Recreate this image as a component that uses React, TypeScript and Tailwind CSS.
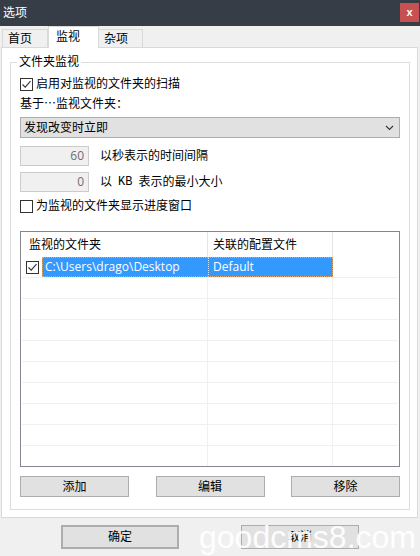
import React from "react";

const Check = ({ checked }: { checked?: boolean }) => (
  <div className="w-[13px] h-[13px] border border-[#333333] bg-white flex items-center justify-center shrink-0">
    {checked && (
      <svg width="11" height="11" viewBox="0 0 11 11">
        <path d="M1.5 5.5 L4.2 8.2 L9.5 2.2" fill="none" stroke="#333333" strokeWidth="1.1" />
      </svg>
    )}
  </div>
);

const Btn = ({ label, className = "" }: { label: string; className?: string }) => (
  <div
    className={
      "bg-[#e1e1e1] border border-[#adadad] flex items-center justify-center text-[12px] leading-[16px] text-black " +
      className
    }
  >
    {label}
  </div>
);

export default function App() {
  const rows = Array.from({ length: 8 });
  return (
    <div className="relative w-[420px] h-[556px] bg-[#f0f0f0] overflow-hidden font-['Open_Sans','Noto_Sans_CJK_SC',sans-serif] text-[12px] text-black flex flex-col">
      {/* Title bar */}
      <div className="h-[26px] bg-[#363d47] flex items-start justify-between shrink-0">
        <div className="pl-[3px] pt-[4px] text-white text-[12px] leading-[18px]">选项</div>
        <div className="mt-[3px] mr-[1px] w-[19px] h-[19px] bg-[#c75050] flex items-center justify-center text-white text-[11px] font-bold leading-none font-['Liberation_Sans',sans-serif]">
          x
        </div>
      </div>

      {/* Tabs */}
      <div className="h-[21px] flex items-end pl-[2px] shrink-0">
        <div className="w-[46px] h-[18px] border border-b-0 border-[#d9d9d9] bg-[#f0f0f0] pl-[5px] leading-[17px]">首页</div>
        <div className="relative z-10 w-[51px] h-[22px] -mb-px border border-b-0 border-[#d9d9d9] bg-white pl-[7px] leading-[19px]">
          监视
        </div>
        <div className="w-[44px] h-[18px] border border-b-0 border-l-0 border-[#d9d9d9] bg-[#f0f0f0] pl-[5px] leading-[17px]">杂项</div>
      </div>

      {/* Panel */}
      <div className="ml-[1px] w-[417px] h-[471px] border border-[#d9d9d9] bg-white pt-[14px] pl-[8px] shrink-0">
        <div className="relative w-[400px] h-[448px] border border-[#dcdcdc] pl-[9px] flex flex-col">
          <div className="absolute left-[6px] top-[-9px] px-[2px] bg-white leading-[16px]">文件夹监视</div>

          <div className="mt-[13px] h-[16px] flex items-center gap-[3px]">
            <Check checked />
            <span className="leading-[16px]">启用对监视的文件夹的扫描</span>
          </div>

          <div className="mt-[3px] h-[16px] leading-[16px] font-['Noto_Sans_CJK_SC',sans-serif]">基于…监视文件夹：</div>

          <div className="mt-[6px] w-[380px] h-[21px] bg-[#e1e1e1] border border-[#adadad] flex items-center justify-between pl-[3px] pr-[5px]">
            <span className="leading-[16px]">发现改变时立即</span>
            <svg width="9" height="6" viewBox="0 0 9 6">
              <path d="M1 1 L4.5 4.5 L8 1" fill="none" stroke="#333333" strokeWidth="1.1" />
            </svg>
          </div>

          <div className="mt-[8px] h-[20px] flex items-center">
            <div className="w-[69px] h-[20px] border border-[#cccccc] bg-[#f0f0f0] text-right pr-[4px] text-[#6d6d6d] leading-[18px]">
              60
            </div>
            <span className="ml-[11px] leading-[16px]">以秒表示的时间间隔</span>
          </div>

          <div className="mt-[6px] h-[20px] flex items-center">
            <div className="w-[69px] h-[20px] border border-[#cccccc] bg-[#f0f0f0] text-right pr-[4px] text-[#6d6d6d] leading-[18px]">
              0
            </div>
            <span className="ml-[11px] leading-[16px] flex items-center">
              以<span className="mx-[6px] font-['Liberation_Mono',monospace] text-[12px]">KB</span>表示的最小大小
            </span>
          </div>

          <div className="mt-[6px] h-[16px] flex items-center gap-[3px]">
            <Check />
            <span className="leading-[16px]">为监视的文件夹显示进度窗口</span>
          </div>

          {/* List */}
          <div className="mt-[17px] w-[380px] h-[236px] border border-[#828790] bg-white pl-[1px] pr-[1px] flex flex-col overflow-hidden">
            <div className="h-[25px] flex shrink-0">
              <div className="w-[186px] border-r border-[#e5e5e5] pl-[7px] leading-[25px]">监视的文件夹</div>
              <div className="w-[125px] border-r border-[#e5e5e5] pl-[5px] leading-[25px]">关联的配置文件</div>
              <div className="flex-1" />
            </div>
            <div className="h-[21px] flex shrink-0 border-b border-[#f0f0f0]">
              <div className="w-[186px] flex items-center pl-[4px]">
                <Check checked />
                <div className="ml-[3px] flex-1 h-[20px] bg-[#3399ff] text-white leading-[18px] pl-[2px] border border-dotted border-r-0 border-[#e0a56a]">
                  C:\Users\drago\Desktop
                </div>
              </div>
              <div className="w-[125px] h-[20px] bg-[#3399ff] text-white leading-[18px] pl-[4px] border-l border-[#cde6ff] border-y border-r border-dotted border-y-[#e0a56a] border-r-[#e0a56a]">
                Default
              </div>
              <div className="flex-1" />
            </div>
            {rows.map((_, i) => (
              <div key={i} className="h-[21px] flex shrink-0 border-b border-[#f0f0f0]">
                <div className="w-[186px] border-r border-[#f0f0f0]" />
                <div className="w-[125px] border-r border-[#f0f0f0]" />
                <div className="flex-1" />
              </div>
            ))}
            <div className="flex-1 flex">
              <div className="w-[186px] border-r border-[#f0f0f0]" />
              <div className="w-[125px] border-r border-[#f0f0f0]" />
              <div className="flex-1" />
            </div>
          </div>

          <div className="mt-[9px] w-[380px] flex justify-between">
            <Btn label="添加" className="w-[109px] h-[21px]" />
            <Btn label="编辑" className="w-[109px] h-[21px]" />
            <Btn label="移除" className="w-[109px] h-[21px]" />
          </div>
        </div>
      </div>

      {/* Bottom buttons */}
      <div className="mt-[7px] flex justify-center gap-[62px]">
        <Btn label="确定" className="w-[118px] h-[24px] border-2 border-[#0078d7]" />
        <Btn label="取消" className="w-[118px] h-[24px]" />
      </div>

      {/* watermark */}
      <div className="absolute left-[199px] top-[521px] text-[32px] leading-[32px] text-white/90 font-['Liberation_Sans',sans-serif] pointer-events-none">
        goodcms8.com
      </div>
    </div>
  );
}
